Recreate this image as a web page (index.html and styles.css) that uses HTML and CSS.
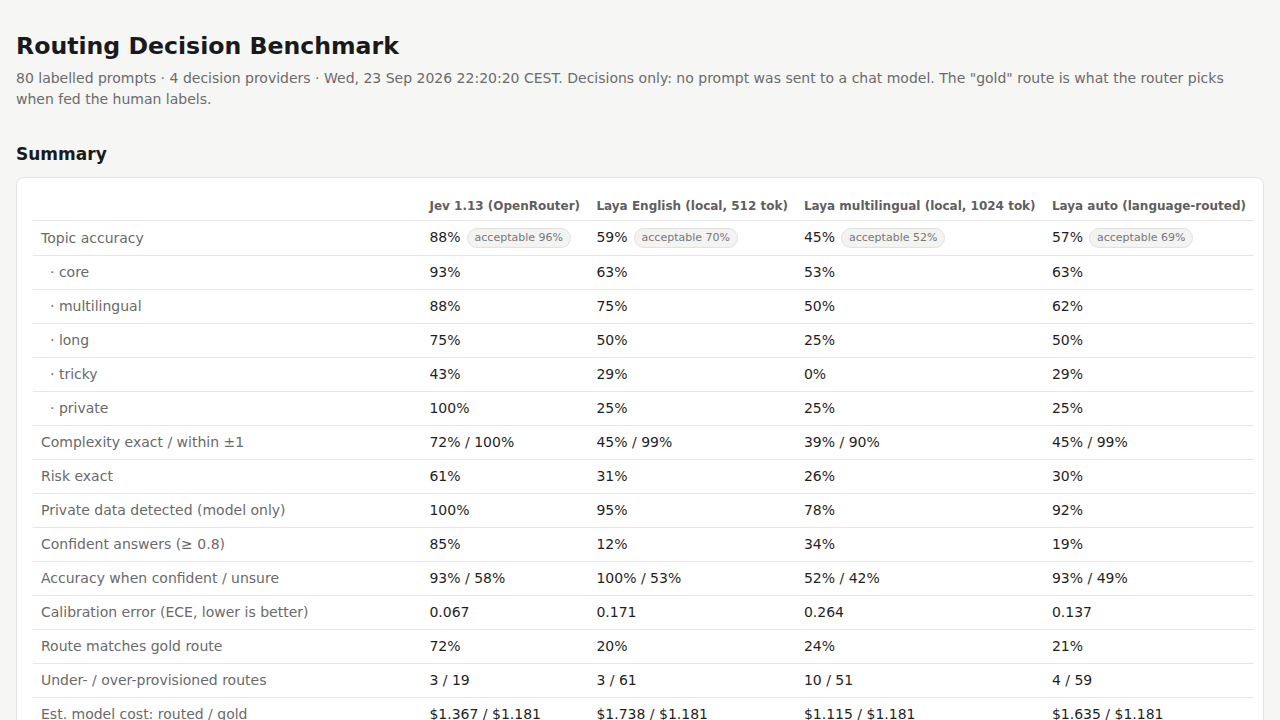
FILE: index.html
```html
<!DOCTYPE html>
<html lang="en">
<head>
<meta charset="utf-8">
<title>Routing Decision Benchmark</title>
<link rel="stylesheet" href="styles.css">
</head>
<body>
<header class="page-head">
  <h1 class="title">Routing Decision Benchmark</h1>
  <p class="subtitle">80 labelled prompts · 4 decision providers · Wed, 23 Sep 2026 22:20:20 CEST. Decisions only: no prompt was sent to a chat model. The "gold" route is what the router picks when fed the human labels.</p>
</header>
<section class="section">
  <h2 class="section-title">Summary</h2>
  <div class="card">
    <table class="summary">
      <thead>
        <tr>
          <th class="label-col"></th>
          <th class="c2">Jev 1.13 (OpenRouter)</th>
          <th class="c3">Laya English (local, 512 tok)</th>
          <th class="c4">Laya multilingual (local, 1024 tok)</th>
          <th class="c5">Laya auto (language-routed)</th>
        </tr>
      </thead>
      <tbody>
        <tr class="with-pill">
          <td class="label">Topic accuracy</td>
          <td>88%<span class="pill">acceptable 96%</span></td>
          <td>59%<span class="pill">acceptable 70%</span></td>
          <td>45%<span class="pill">acceptable 52%</span></td>
          <td>57%<span class="pill">acceptable 69%</span></td>
        </tr>
        <tr><td class="label sub">· core</td><td>93%</td><td>63%</td><td>53%</td><td>63%</td></tr>
        <tr><td class="label sub">· multilingual</td><td>88%</td><td>75%</td><td>50%</td><td>62%</td></tr>
        <tr><td class="label sub">· long</td><td>75%</td><td>50%</td><td>25%</td><td>50%</td></tr>
        <tr><td class="label sub">· tricky</td><td>43%</td><td>29%</td><td>0%</td><td>29%</td></tr>
        <tr><td class="label sub">· private</td><td>100%</td><td>25%</td><td>25%</td><td>25%</td></tr>
        <tr><td class="label">Complexity exact / within ±1</td><td>72% / 100%</td><td>45% / 99%</td><td>39% / 90%</td><td>45% / 99%</td></tr>
        <tr><td class="label">Risk exact</td><td>61%</td><td>31%</td><td>26%</td><td>30%</td></tr>
        <tr><td class="label">Private data detected (model only)</td><td>100%</td><td>95%</td><td>78%</td><td>92%</td></tr>
        <tr><td class="label">Confident answers (≥ 0.8)</td><td>85%</td><td>12%</td><td>34%</td><td>19%</td></tr>
        <tr><td class="label">Accuracy when confident / unsure</td><td>93% / 58%</td><td>100% / 53%</td><td>52% / 42%</td><td>93% / 49%</td></tr>
        <tr><td class="label">Calibration error (ECE, lower is better)</td><td>0.067</td><td>0.171</td><td>0.264</td><td>0.137</td></tr>
        <tr><td class="label">Route matches gold route</td><td>72%</td><td>20%</td><td>24%</td><td>21%</td></tr>
        <tr><td class="label">Under- / over-provisioned routes</td><td>3 / 19</td><td>3 / 61</td><td>10 / 51</td><td>4 / 59</td></tr>
        <tr><td class="label">Est. model cost: routed / gold</td><td>$1.367 / $1.181</td><td>$1.738 / $1.181</td><td>$1.115 / $1.181</td><td>$1.635 / $1.181</td></tr>
      </tbody>
    </table>
  </div>
</section>
</body>
</html>
```

FILE: styles.css
```css
html, body {
  margin: 0;
  background: #f6f6f5;
}
body {
  padding: 16px;
  font-family: "DejaVu Sans", "Noto Sans", sans-serif;
  color: #1c1c1c;
}
.title {
  margin: 13px 0 5px;
  font-size: 23.6px;
  line-height: 34px;
  font-weight: 700;
  color: #1a1a1a;
}
.subtitle {
  margin: 0;
  font-size: 14px;
  line-height: 21px;
  color: #6b6b6b;
}
.section {
  margin-top: 33px;
}
.section-title {
  margin: 0 0 12px;
  font-size: 17px;
  line-height: 22px;
  font-weight: 700;
  color: #1a1a1a;
}
.card {
  background: #fff;
  border: 1px solid #e4e4e2;
  border-radius: 8px;
  padding: 10px 9px 10px 16px;
}
.summary {
  width: 100%;
  border-collapse: collapse;
  font-size: 14px;
}
.summary th {
  text-align: left;
  font-size: 12px;
  font-weight: 700;
  color: #5f5f5f;
  padding: 10px 8px 5px;
  line-height: 17px;
  white-space: nowrap;
  border-bottom: 1px solid #e6e6e4;
}
.summary th.c2 { width: 151px; }
.summary th.c3 { width: 191px; }
.summary th.c4 { width: 232px; }
.summary th.c5 { width: 194px; }
.summary td {
  padding: 8px 8px;
  line-height: 17px;
  color: #1f1f1f;
  border-bottom: 1px solid #e6e6e4;
  white-space: nowrap;
}
.summary tr.with-pill td {
  padding-top: 7px;
  padding-bottom: 7px;
}
.summary td.label {
  color: #6a6a6a;
}
.summary td.sub {
  padding-left: 17px;
}
.pill {
  display: inline-block;
  margin-left: 6px;
  padding: 1px 7px;
  font-size: 11px;
  line-height: 16px;
  color: #777;
  background: #f3f3f2;
  border: 1px solid #e2e2e0;
  border-radius: 10px;
  vertical-align: middle;
}
```
